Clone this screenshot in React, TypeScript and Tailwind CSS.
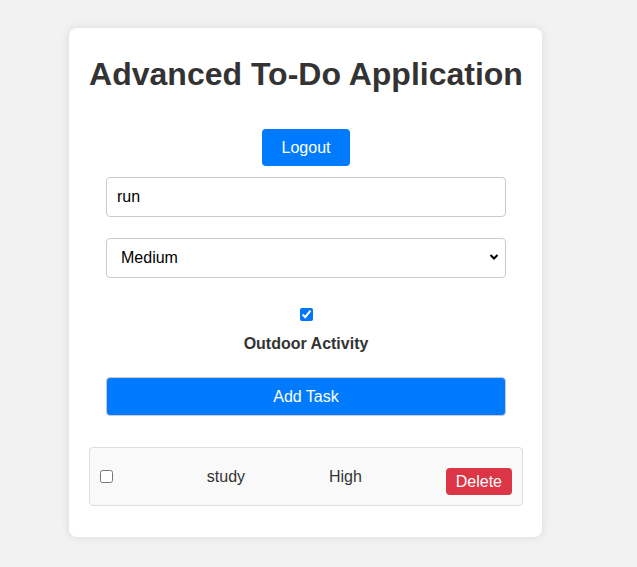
import React from "react";

export default function App() {
  return (
    <div
      className="min-h-[567px] w-full bg-[#f2f2f2] pt-[28px] pb-[30px]"
      style={{ fontFamily: '"Liberation Sans", Arial, sans-serif' }}
    >
      <div className="ml-[69px] w-[473px] rounded-[8px] bg-white py-[20px] pl-[20px] pr-[19px] shadow-[0_0_10px_rgba(0,0,0,0.1)]">
        <h1 className="mt-[8px] whitespace-nowrap text-center text-[32px] leading-[37px] font-bold text-[#333]">
          Advanced To-Do Application
        </h1>
        <div className="mt-[36px] flex justify-center">
          <button className="h-[37px] rounded-[4px] bg-[#007bff] px-[20px] text-[16px] leading-[18px] text-white">
            Logout
          </button>
        </div>
        <div className="mt-[11px] flex flex-col items-center">
          <input
            type="text"
            defaultValue="run"
            className="h-[40px] w-[400px] rounded-[4px] border border-[#ccc] bg-white px-[10px] text-[16px] text-black outline-none"
          />
          <div className="relative mt-[21px] w-[400px]">
            <select
              defaultValue="Medium"
              className="h-[40px] w-[400px] appearance-none rounded-[4px] border border-[#ccc] bg-white pl-[14px] text-[16px] text-black outline-none"
            >
              <option>Low</option>
              <option>Medium</option>
              <option>High</option>
            </select>
            <svg
              className="pointer-events-none absolute top-[15px] right-[7px]"
              width="10"
              height="8"
              viewBox="0 0 10 8"
            >
              <path d="M1.5 2 L5 5.5 L8.5 2" fill="none" stroke="#000" strokeWidth="2" />
            </svg>
          </div>
          <input type="checkbox" defaultChecked className="mt-[30px] h-[13px] w-[13px] accent-[#0075ff]" />
          <label className="mt-[14px] text-[16px] leading-[18px] font-bold text-[#333]">Outdoor Activity</label>
          <button className="mt-[24px] h-[39px] w-[400px] rounded-[4px] border border-[#ccc] bg-[#007bff] text-[16px] text-white">
            Add Task
          </button>
        </div>
        <ul className="mt-[31px] mb-[11px]">
          <li className="flex items-center justify-between rounded-[4px] border border-[#ddd] bg-[#f9f9f9] px-[10px] pb-[10px] pt-[10px]">
            <input type="checkbox" className="mr-[10px] h-[13px] w-[13px]" />
            <span className="text-[16px] text-[#333]">study</span>
            <span className="text-[16px] text-[#333]">High</span>
            <button className="mt-[10px] h-[27px] rounded-[4px] bg-[#dc3545] px-[10px] text-[16px] leading-[18px] text-white">
              Delete
            </button>
          </li>
        </ul>
      </div>
    </div>
  );
}
